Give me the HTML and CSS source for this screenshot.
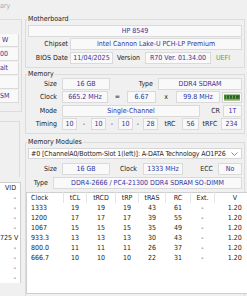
FILE: index.html
```html
<!DOCTYPE html>
<html>
<head>
  <meta charset="utf-8">
  <title>System Summary</title>
  <link rel="stylesheet" href="styles.css">
</head>
<body>
  <div class="window">
    <div class="title">ary</div>
    <div class="main">
      <div class="left">
        <div class="lgroup">
          <div class="lfield pad-w">W</div>
          <div class="lfield">00</div>
          <div class="lfield">alt</div>
          <div class="lfield"></div>
          <div class="lfield">SM</div>
        </div>
        <div class="lbox"></div>
        <div class="vid">
          <div class="vrow vhead">VID</div>
          <div class="vrow">-</div>
          <div class="vrow">-</div>
          <div class="vrow">-</div>
          <div class="vrow">-</div>
          <div class="vrow">725 V</div>
          <div class="vrow">-</div>
          <div class="vrow">-</div>
          <div class="vrow">-</div>
          <div class="vrow">-</div>
        </div>
      </div>

      <div class="right">
        <fieldset class="group mb">
          <legend>Motherboard</legend>
          <div class="row r1">
            <div class="field grow">HP 8549</div>
          </div>
          <div class="row r2">
            <span class="lbl l-mb">Chipset</span>
            <div class="field grow">Intel Cannon Lake-U PCH-LP Premium</div>
          </div>
          <div class="row r3">
            <span class="lbl l-mb">BIOS Date</span>
            <div class="field f-date">11/04/2025</div>
            <span class="lbl l-ver">Version</span>
            <div class="field f-ver">R70 Ver. 01.34.00</div>
            <span class="uefi">UEFI</span>
          </div>
        </fieldset>

        <fieldset class="group mem">
          <legend>Memory</legend>
          <div class="row">
            <span class="lbl l-mem">Size</span>
            <div class="field f-size">16 GB</div>
            <span class="lbl l-type">Type</span>
            <div class="field grow">DDR4 SDRAM</div>
          </div>
          <div class="row gap1">
            <span class="lbl l-mem">Clock</span>
            <div class="field f-clock">665.2 MHz</div>
            <span class="op op-eq">=</span>
            <div class="field f-mult">6.67</div>
            <span class="op op-x">x</span>
            <div class="field f-bclk">99.8 MHz</div>
            <span class="ramicon">
              <svg width="20" height="11" viewBox="0 0 20 11">
                <rect x="0.5" y="0.5" width="19" height="10" fill="#fff" stroke="#d4d4d4"/>
                <rect x="2" y="2.5" width="16" height="6" fill="#4f8a3c"/>
                <rect x="3" y="3.5" width="14" height="3" fill="#2f5f24"/>
                <rect x="4" y="3.5" width="1" height="3" fill="#6fa85a"/>
                <rect x="7" y="3.5" width="1" height="3" fill="#6fa85a"/>
                <rect x="10" y="3.5" width="1" height="3" fill="#6fa85a"/>
                <rect x="13" y="3.5" width="1" height="3" fill="#6fa85a"/>
                <rect x="2" y="7.5" width="16" height="1" fill="#b9c98a"/>
              </svg>
            </span>
          </div>
          <div class="row gap2">
            <span class="lbl l-mem">Mode</span>
            <div class="field f-mode">Single-Channel</div>
            <span class="lbl l-cr">CR</span>
            <div class="field grow">1T</div>
          </div>
          <div class="row gap1">
            <span class="lbl l-mem">Timing</span>
            <div class="field f-t">10</div>
            <span class="op op-d1">-</span>
            <div class="field f-t">10</div>
            <span class="op op-d2">-</span>
            <div class="field f-t">10</div>
            <span class="op op-d3">-</span>
            <div class="field f-t">28</div>
            <span class="op op-trc">tRC</span>
            <div class="field f-trc">56</div>
            <span class="op op-trfc">tRFC</span>
            <div class="field grow">234</div>
          </div>
        </fieldset>

        <fieldset class="group mods">
          <legend>Memory Modules</legend>
          <div class="select">
            <span class="seltext">#0 [ChannelA0/Bottom-Slot 1(left)]: A-DATA Technology AO1P26</span>
            <svg class="chev" width="7" height="4" viewBox="0 0 7 4"><path d="M0.5 0.5 L3.5 3.5 L6.5 0.5" fill="none" stroke="#8a8a8a"/></svg>
          </div>
          <div class="row mrow">
            <span class="lbl l-mem">Size</span>
            <div class="field f-size">16 GB</div>
            <span class="lbl l-mclk">Clock</span>
            <div class="field f-mclk">1333 MHz</div>
            <span class="lbl l-ecc">ECC</span>
            <div class="field grow">No</div>
          </div>
          <div class="row trow">
            <span class="lbl l-mtype">Type</span>
            <div class="field grow">DDR4-2666 / PC4-21300 DDR4 SDRAM SO-DIMM</div>
          </div>
          <table class="timings">
            <tr>
              <th class="c-clock">Clock</th><th class="c-cl">tCL</th><th class="c-rcd">tRCD</th><th class="c-rp">tRP</th>
              <th class="c-ras">tRAS</th><th class="c-rc">RC</th><th class="c-ext">Ext.</th><th class="c-v">V</th>
            </tr>
            <tr><td>1333</td><td>19</td><td>19</td><td>19</td><td>43</td><td>61</td><td>-</td><td>1.20</td></tr>
            <tr><td>1200</td><td>17</td><td>17</td><td>17</td><td>39</td><td>55</td><td>-</td><td>1.20</td></tr>
            <tr><td>1067</td><td>15</td><td>15</td><td>15</td><td>35</td><td>49</td><td>-</td><td>1.20</td></tr>
            <tr><td>933.3</td><td>13</td><td>13</td><td>13</td><td>30</td><td>43</td><td>-</td><td>1.20</td></tr>
            <tr><td>800.0</td><td>11</td><td>11</td><td>11</td><td>26</td><td>37</td><td>-</td><td>1.20</td></tr>
            <tr><td>666.7</td><td>10</td><td>10</td><td>10</td><td>22</td><td>31</td><td>-</td><td>1.20</td></tr>
            <tr class="empty"><td></td><td></td><td></td><td></td><td></td><td></td><td></td><td></td></tr>
          </table>
        </fieldset>
      </div>
    </div>
  </div>
</body>
</html>
```

FILE: styles.css
```css
body {
  margin: 0;
  background: #f0f0f0;
  font-family: "DejaVu Sans", sans-serif;
  font-stretch: condensed;
  font-size: 7px;
  color: #1e1e1e;
}

.window {
  width: 247px;
  height: 296px;
  overflow: hidden;
}

/* window title, only its tail is visible */
.title {
  height: 15px;
  line-height: 13px;
  color: #a9a9a9;
}

.main {
  display: flex;
  gap: 3px;
}

/* ---- left column (cut off by the window edge) ---- */
.left {
  width: 22px;
  flex: none;
  overflow: hidden;
}

.lgroup {
  margin-top: 4px;
  height: 93px;
  border-top: 1px solid #dcdcdc;
  border-right: 1px solid #dcdcdc;
  border-bottom: 1px solid #dcdcdc;
  padding-top: 14px;
  box-sizing: border-box;
}

.lfield {
  width: 19px;
  height: 13px;
  margin-bottom: 1px;
  line-height: 12px;
  white-space: nowrap;
  background: #f9f9f9;
  border-bottom: 1px solid #dadada;
  border-right: 1px solid #dadada;
  box-sizing: border-box;
  color: #33339c;
}

.lfield.pad-w {
  padding-left: 2px;
}

.lbox {
  margin-top: 9px;
  width: 20px;
  height: 56px;
  border-top: 1px solid #dcdcdc;
  border-right: 1px solid #dcdcdc;
  box-sizing: border-box;
}

.vid {
  margin-top: 5px;
  width: 21px;
  box-sizing: border-box;
  background: #fff;
  border-right: 1px solid #cfcfcf;
  border-top: 1px solid #cfcfcf;
}

.vrow {
  height: 10px;
  line-height: 10px;
  text-align: right;
  padding-right: 4px;
  white-space: nowrap;
  color: #222;
}

/* ---- right column ---- */
.right {
  width: 220px;
  flex: none;
}

.group {
  margin: 0;
  padding: 2px 2px 3px 2px;
  border: 1px solid #dcdcdc;
  min-width: 0;
}

.group legend {
  padding: 0 1px;
  margin-left: -1px;
  line-height: 8px;
  color: #222;
}

.group.mem {
  margin-top: 2px;
  padding-top: 0;
}

.group.mods {
  margin-top: 4px;
  padding-bottom: 20px;
}

.row {
  display: flex;
  align-items: center;
  height: 12px;
}

.row.r2 {
  margin-top: 1px;
}

.row.r3 {
  margin-top: 2px;
}

.row.gap1 {
  margin-top: 1px;
}

.row.gap2 {
  margin-top: 2px;
}

.field {
  height: 100%;
  box-sizing: border-box;
  background: #f9f9f9;
  border: 1px solid #dadada;
  color: #33339c;
  text-align: center;
  line-height: 10px;
  white-space: nowrap;
  overflow: hidden;
}

.grow {
  flex: 1;
}

.lbl {
  flex: none;
  text-align: right;
  white-space: nowrap;
  box-sizing: border-box;
  color: #222;
}

.l-mb { width: 42px; padding-right: 2px; }
.l-ver { width: 32px; padding-right: 5px; }
.l-mem { width: 34px; padding-right: 5px; }
.l-type { width: 48px; padding-right: 5px; }
.l-cr { width: 23px; padding-right: 3px; }
.l-mclk { width: 33px; padding-right: 6px; }
.l-ecc { width: 35px; padding-right: 5px; }
.l-mtype { width: 25px; padding-right: 5px; }

.f-date { width: 43px; flex: none; }
.f-ver { width: 66px; flex: none; }
.f-size { width: 48px; flex: none; }
.f-clock { width: 46px; flex: none; }
.f-mult { width: 29px; flex: none; }
.f-bclk { width: 44px; flex: none; }
.f-mode { width: 138px; flex: none; }
.f-t { width: 15px; flex: none; }
.f-trc { width: 17px; flex: none; }
.f-mclk { width: 40px; flex: none; }

.uefi {
  margin-left: 5px;
  color: #3dae3d;
}

.op {
  flex: none;
  text-align: center;
  color: #222;
}

.op-eq { width: 19px; }
.op-x { width: 20px; }
.op-d1 { width: 14px; }
.op-d2 { width: 12px; }
.op-d3 { width: 10px; }
.op-trc { width: 24px; }
.op-trfc { width: 22px; }

.ramicon {
  flex: none;
  margin-left: 2px;
  display: flex;
}

.select {
  height: 11px;
  box-sizing: border-box;
  background: #fff;
  border: 1px solid #d6d6d6;
  display: flex;
  align-items: center;
  padding: 0 3px 0 2px;
  white-space: nowrap;
  color: #1e1e1e;
}

.seltext {
  flex: 1;
  overflow: hidden;
  letter-spacing: -0.12px;
}

.chev {
  flex: none;
  margin-left: 3px;
}

.mrow {
  margin-top: 4px;
}

.trow {
  margin-top: 2px;
}

.timings {
  margin: 3px -2px 0 -2px;
  width: 217px;
  border-collapse: collapse;
  table-layout: fixed;
  background: #fff;
  border: 1px solid #cfcfcf;
}

.timings th,
.timings td {
  padding: 0;
  text-align: center;
  font-weight: normal;
  white-space: nowrap;
  height: 10px;
  line-height: 10px;
  color: #222;
}

.timings th {
  border-left: 1px solid #e4e4e4;
}

.timings th:first-child {
  border-left: none;
}

.timings th.c-clock,
.timings td:first-child {
  text-align: left;
  padding-left: 4px;
}

.timings tr.empty td {
  height: 30px;
}

.c-clock { width: 32px; }
.c-cl { width: 22px; }
.c-rcd { width: 28px; }
.c-rp { width: 22px; }
.c-ras { width: 26px; }
.c-rc { width: 24px; }
.c-ext { width: 23px; }
.c-v { width: 40px; }
```
